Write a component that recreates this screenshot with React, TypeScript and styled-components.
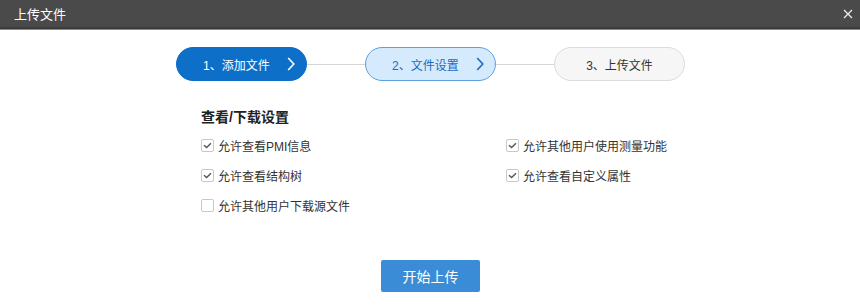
import React from "react"
import styled, { createGlobalStyle } from "styled-components"

const GlobalStyle = createGlobalStyle`
  html, body {
    margin: 0;
    padding: 0;
    background: #fff;
    font-family: "Liberation Sans", "Noto Sans CJK SC", sans-serif;
  }
`

type StepState = "done" | "active" | "todo"

interface Step {
  label: string
  state: StepState
  arrow: boolean
}

const steps: Step[] = [
  { label: "1、添加文件", state: "done", arrow: true },
  { label: "2、文件设置", state: "active", arrow: true },
  { label: "3、上传文件", state: "todo", arrow: false },
]

interface Option {
  label: string
  checked: boolean
}

const leftOptions: Option[] = [
  { label: "允许查看PMI信息", checked: true },
  { label: "允许查看结构树", checked: true },
  { label: "允许其他用户下载源文件", checked: false },
]

const rightOptions: Option[] = [
  { label: "允许其他用户使用测量功能", checked: true },
  { label: "允许查看自定义属性", checked: true },
]

const Check = ({ label, checked }: Option) => (
  <OptionRow>
    <Box>
      {checked && (
        <svg width="9" height="7" viewBox="0 0 9 7">
          <path d="M1 3.2 L3.6 5.6 L8 1.2" fill="none" stroke="#555" strokeWidth="1.4" />
        </svg>
      )}
    </Box>
    <OptionLabel>{label}</OptionLabel>
  </OptionRow>
)

export default function App() {
  return (
    <>
      <GlobalStyle />
      <Dialog>
        <TitleBar>
          <Title>上传文件</Title>
          <Close>
            <svg width="10" height="10" viewBox="0 0 10 10">
              <path d="M1 1 L9 9 M9 1 L1 9" stroke="#f2f2f2" strokeWidth="1.2" />
            </svg>
          </Close>
        </TitleBar>

        <Steps>
          {steps.map((s, i) => (
            <React.Fragment key={s.label}>
              {i > 0 && <Connector />}
              <Pill state={s.state}>
                <span>{s.label}</span>
                {s.arrow && (
                  <Chevron viewBox="0 0 8 14" width="8" height="14">
                    <path d="M1.2 1 L6.8 7 L1.2 13" fill="none" stroke="currentColor" strokeWidth="1.6" />
                  </Chevron>
                )}
              </Pill>
            </React.Fragment>
          ))}
        </Steps>

        <Settings>
          <SectionTitle>查看/下载设置</SectionTitle>
          <Columns>
            <Column>
              {leftOptions.map((o) => (
                <Check key={o.label} {...o} />
              ))}
            </Column>
            <Column>
              {rightOptions.map((o) => (
                <Check key={o.label} {...o} />
              ))}
            </Column>
          </Columns>
        </Settings>

        <Footer>
          <StartButton>开始上传</StartButton>
        </Footer>
      </Dialog>
    </>
  )
}

const Dialog = styled.div`
  width: 860px;
  height: 307px;
  display: flex;
  flex-direction: column;
  background: #fff;
`

const TitleBar = styled.div`
  height: 27px;
  background: #4a4a4a;
  border-bottom: 2px solid #3b3b3b;
  display: flex;
  align-items: center;
  justify-content: space-between;
  padding: 0 5px 0 14px;
  box-shadow: 0 1px 0 #8a8a8a;
`

const Title = styled.div`
  color: #fff;
  font-size: 13px;
`

const Close = styled.div`
  width: 14px;
  height: 14px;
  display: flex;
  align-items: center;
  justify-content: center;
`

const Steps = styled.div`
  display: flex;
  align-items: center;
  padding: 18px 0 0 176px;
`

const Connector = styled.div`
  width: 58px;
  height: 1px;
  background: #d6d6d6;
`

const pillColors: Record<StepState, { bg: string; border: string; color: string }> = {
  done: { bg: "#0e6fc9", border: "#0e6fc9", color: "#fff" },
  active: { bg: "#d5eafd", border: "#5aa1e0", color: "#1b6cc0" },
  todo: { bg: "#f6f6f6", border: "#dcdcdc", color: "#333" },
}

const Pill = styled.div<{ state: StepState }>`
  box-sizing: border-box;
  width: 131px;
  height: 34px;
  border-radius: 17px;
  background: ${(p) => pillColors[p.state].bg};
  border: 1px solid ${(p) => pillColors[p.state].border};
  color: ${(p) => pillColors[p.state].color};
  display: flex;
  align-items: center;
  justify-content: ${(p) => (p.state === "todo" ? "center" : "space-between")};
  padding: ${(p) => (p.state === "todo" ? "0" : "0 11px 0 26px")};
  font-size: 12px;
`

const Chevron = styled.svg`
  display: block;
`

const Settings = styled.div`
  padding: 27px 0 0 201px;
`

const SectionTitle = styled.div`
  font-size: 14px;
  font-weight: bold;
  color: #222;
  line-height: 18px;
  margin-bottom: 4px;
`

const Columns = styled.div`
  display: flex;
`

const Column = styled.div`
  width: 305px;
  display: flex;
  flex-direction: column;
`

const OptionRow = styled.div`
  height: 30px;
  display: flex;
  align-items: center;
`

const Box = styled.div`
  box-sizing: border-box;
  width: 13px;
  height: 13px;
  border: 1px solid #c8c8c8;
  border-radius: 2px;
  background: #fff;
  display: flex;
  align-items: center;
  justify-content: center;
  margin-right: 4px;
`

const OptionLabel = styled.span`
  font-size: 12px;
  color: #333;
`

const Footer = styled.div`
  display: flex;
  justify-content: center;
  padding: 40px 0 0 1px;
`

const StartButton = styled.button`
  width: 99px;
  height: 32px;
  border: none;
  border-radius: 2px;
  background: #3a8cd6;
  color: #fff;
  font-size: 14px;
  font-family: inherit;
  cursor: pointer;
`
